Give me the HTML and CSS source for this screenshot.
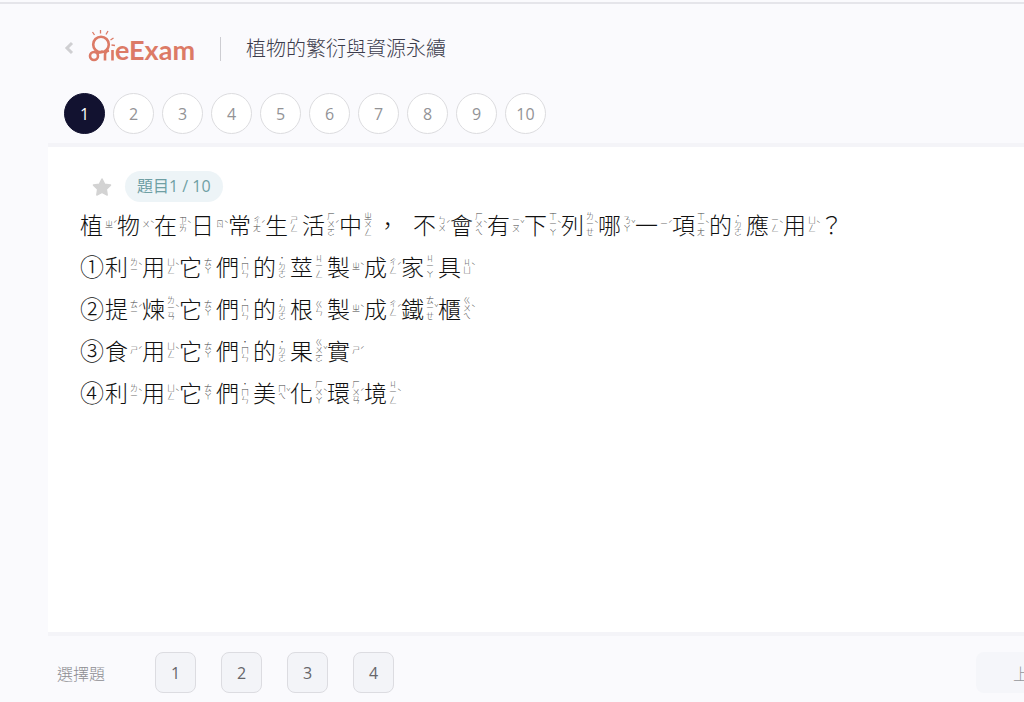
FILE: index.html
```html
<!DOCTYPE html>
<html lang="zh-Hant">
<head>
    <meta charset="UTF-8">
    <meta name="viewport" content="width=device-width, initial-scale=1.0">
    <title>OneExam</title>
    <link rel="stylesheet" href="styles.css">
</head>
<body>
    <header class="top">
        <div class="title-row">
            <a href="#" class="back" aria-label="返回">
                <svg width="10" height="14" viewBox="0 0 10 14"><path d="M8 2L3 7l5 5" fill="none" stroke="#cfcfd2" stroke-width="3"/></svg>
            </a>
            <a href="#" class="logo" aria-label="OneExam">
                <svg width="112" height="36" viewBox="0 0 112 36">
                    <g fill="none" stroke="#dc7a66" stroke-width="2.600">
                        <circle cx="13" cy="14.500" r="7.800"/>
                        <circle cx="6" cy="26" r="4"/>
                        <path d="M9 23c3-1 5-1 6-2M17 30.500v-5.500c0-3 1-4 4-4.500M24.500 30.500V20"/>
                        <path stroke-width="1.300" d="M4.500 2l2 3M12.500 0v3.500M20 1l-2 3.500M25.500 8l-3 2M27 15.500l-3.500-.5"/>
                    </g>
                    <text class="logo-text" x="27" y="30">eExam</text>
                </svg>
            </a>
            <h1>植物的繁衍與資源永續</h1>
        </div>
        <nav class="pages">
            <button class="active">1</button>
            <button>2</button>
            <button>3</button>
            <button>4</button>
            <button>5</button>
            <button>6</button>
            <button>7</button>
            <button>8</button>
            <button>9</button>
            <button>10</button>
        </nav>
    </header>

    <main class="question">
        <div class="info">
            <button class="star" aria-label="收藏">
                <svg width="20" height="18" viewBox="0 0 20 18"><path d="M10 1l2.600 5.200 5.900.9-4.200 4.100.9 5.800-5.200-2.700L4.800 17l.9-5.800L1.500 7.100l5.900-.9z" fill="#d3d3d3" stroke="#d3d3d3" stroke-width="1.500" stroke-linejoin="round"/></svg>
            </button>
            <span class="badge">題目1 / 10</span>
        </div>

        <p><ruby>植<rt><b>ㄓ</b><i>ˊ</i></rt></ruby><ruby>物<rt><b>ㄨ</b><i>ˋ</i></rt></ruby><ruby>在<rt><b>ㄗㄞ</b><i>ˋ</i></rt></ruby><ruby>日<rt><b>ㄖ</b><i>ˋ</i></rt></ruby><ruby>常<rt><b>ㄔㄤ</b><i>ˊ</i></rt></ruby><ruby>生<rt><b>ㄕㄥ</b></rt></ruby><ruby>活<rt><b>ㄏㄨㄛ</b><i>ˊ</i></rt></ruby><ruby>中<rt><b>ㄓㄨㄥ</b></rt></ruby><ruby>，</ruby><ruby>不<rt><b>ㄅㄨ</b><i>ˊ</i></rt></ruby><ruby>會<rt><b>ㄏㄨㄟ</b><i>ˋ</i></rt></ruby><ruby>有<rt><b>ㄧㄡ</b><i>ˇ</i></rt></ruby><ruby>下<rt><b>ㄒㄧㄚ</b><i>ˋ</i></rt></ruby><ruby>列<rt><b>ㄌㄧㄝ</b><i>ˋ</i></rt></ruby><ruby>哪<rt><b>ㄋㄚ</b><i>ˇ</i></rt></ruby><ruby>一<rt><b>ㄧ</b><i>ˊ</i></rt></ruby><ruby>項<rt><b>ㄒㄧㄤ</b><i>ˋ</i></rt></ruby><ruby>的<rt><b>˙ㄉㄜ</b></rt></ruby><ruby>應<rt><b>ㄧㄥ</b><i>ˋ</i></rt></ruby><ruby>用<rt><b>ㄩㄥ</b><i>ˋ</i></rt></ruby><ruby>？</ruby></p>
        <p><span class="num">①</span><ruby>利<rt><b>ㄌㄧ</b><i>ˋ</i></rt></ruby><ruby>用<rt><b>ㄩㄥ</b><i>ˋ</i></rt></ruby><ruby>它<rt><b>ㄊㄚ</b></rt></ruby><ruby>們<rt><b>˙ㄇㄣ</b></rt></ruby><ruby>的<rt><b>˙ㄉㄜ</b></rt></ruby><ruby>莖<rt><b>ㄐㄧㄥ</b></rt></ruby><ruby>製<rt><b>ㄓ</b><i>ˋ</i></rt></ruby><ruby>成<rt><b>ㄔㄥ</b><i>ˊ</i></rt></ruby><ruby>家<rt><b>ㄐㄧㄚ</b></rt></ruby><ruby>具<rt><b>ㄐㄩ</b><i>ˋ</i></rt></ruby></p>
        <p><span class="num">②</span><ruby>提<rt><b>ㄊㄧ</b><i>ˊ</i></rt></ruby><ruby>煉<rt><b>ㄌㄧㄢ</b><i>ˋ</i></rt></ruby><ruby>它<rt><b>ㄊㄚ</b></rt></ruby><ruby>們<rt><b>˙ㄇㄣ</b></rt></ruby><ruby>的<rt><b>˙ㄉㄜ</b></rt></ruby><ruby>根<rt><b>ㄍㄣ</b></rt></ruby><ruby>製<rt><b>ㄓ</b><i>ˋ</i></rt></ruby><ruby>成<rt><b>ㄔㄥ</b><i>ˊ</i></rt></ruby><ruby>鐵<rt><b>ㄊㄧㄝ</b><i>ˇ</i></rt></ruby><ruby>櫃<rt><b>ㄍㄨㄟ</b><i>ˋ</i></rt></ruby></p>
        <p><span class="num">③</span><ruby>食<rt><b>ㄕ</b><i>ˊ</i></rt></ruby><ruby>用<rt><b>ㄩㄥ</b><i>ˋ</i></rt></ruby><ruby>它<rt><b>ㄊㄚ</b></rt></ruby><ruby>們<rt><b>˙ㄇㄣ</b></rt></ruby><ruby>的<rt><b>˙ㄉㄜ</b></rt></ruby><ruby>果<rt><b>ㄍㄨㄛ</b><i>ˇ</i></rt></ruby><ruby>實<rt><b>ㄕ</b><i>ˊ</i></rt></ruby></p>
        <p><span class="num">④</span><ruby>利<rt><b>ㄌㄧ</b><i>ˋ</i></rt></ruby><ruby>用<rt><b>ㄩㄥ</b><i>ˋ</i></rt></ruby><ruby>它<rt><b>ㄊㄚ</b></rt></ruby><ruby>們<rt><b>˙ㄇㄣ</b></rt></ruby><ruby>美<rt><b>ㄇㄟ</b><i>ˇ</i></rt></ruby><ruby>化<rt><b>ㄏㄨㄚ</b><i>ˋ</i></rt></ruby><ruby>環<rt><b>ㄏㄨㄢ</b><i>ˊ</i></rt></ruby><ruby>境<rt><b>ㄐㄧㄥ</b><i>ˋ</i></rt></ruby></p>
    </main>

    <footer class="answers">
        <span class="type">選擇題</span>
        <div class="choices">
            <button>1</button>
            <button>2</button>
            <button>3</button>
            <button>4</button>
        </div>
        <button class="prev">上一題</button>
    </footer>
</body>
</html>
```
FILE: styles.css
```css
* {
    box-sizing: border-box;
}

body {
    display: flex;
    flex-direction: column;
    min-height: 100vh;
    margin: 0;
    padding-top: 2px;
    overflow: hidden;
    background-color: #fafafd;
    font-family: "Open Sans", "Noto Sans CJK TC", sans-serif;
}

button {
    padding: 0;
    font: inherit;
    cursor: pointer;
}

.top {
    border-top: 2px solid #e5e5ea;
    padding: 22px 0 13px 64px;
}

.title-row {
    display: flex;
    align-items: center;
    height: 44px;
}

.back, .logo {
    display: flex;
}

.logo {
    margin-left: 14px;
}

.logo-text {
    fill: #dc7a66;
    font: bold 27px Lato, sans-serif;
}

h1 {
    margin: 2px 0 0 20px;
    padding-left: 25px;
    border-left: 1px solid #cdcdd2;
    color: #3c3c4c;
    font-size: 20px;
    font-weight: 300;
    line-height: 24px;
}

.pages {
    display: flex;
    gap: 8px;
    margin-top: 23px;
}

.pages button {
    width: 41px;
    height: 41px;
    border: 1px solid #dcdcdf;
    border-radius: 50%;
    background-color: #fff;
    color: #939396;
    font-size: 16px;
}

.pages .active {
    border-color: #121230;
    background-color: #121230;
    color: #fff;
}

.question {
    flex: 1;
    margin-left: 48px;
    padding: 24px 32px;
    background-color: #fff;
    box-shadow: 0 0 0 4px #f4f4f8;
    clip-path: inset(-4px 0 -4px 0);
}

.info {
    display: flex;
    align-items: center;
    gap: 13px;
    margin-bottom: 1px;
    padding-left: 12px;
}

.star {
    display: flex;
    border: none;
    background: none;
}

.badge {
    padding: 0 12px;
    border-radius: 16px;
    background-color: #edf4f7;
    color: #6f9fa4;
    font-size: 16px;
    line-height: 31px;
}

p {
    display: flex;
    align-items: center;
    height: 42px;
    margin: 0;
    color: #111;
    font-family: "Noto Sans CJK TC", sans-serif;
    font-size: 23px;
    font-weight: 300;
    line-height: 42px;
}

/* 注音放在字的右邊 */
ruby {
    display: flex;
    align-items: center;
    width: 37px;
}

rt {
    display: flex;
    align-items: center;
    margin-left: 2px;
    color: #444;
    font-size: 8px;
    line-height: 8px;
}

rt b {
    width: 8px;
    font-weight: 300;
    text-align: center;
    word-break: break-all;
}

rt i {
    font-style: normal;
    width: 4px;
}

.num {
    width: 25px;
    font-size: 24px;
}

.answers {
    display: flex;
    align-items: center;
    padding: 20px 0 9px 57px;
}

.type {
    width: 98px;
    color: #8d8d92;
    font-size: 16px;
    font-weight: 300;
}

.choices {
    display: flex;
    gap: 25px;
}

.choices button {
    width: 41px;
    height: 41px;
    border: 1px solid #dcdce1;
    border-radius: 8px;
    background-color: #f3f4f8;
    color: #66666a;
    font-size: 16px;
}

.prev {
    flex: none;
    width: 122px;
    height: 41px;
    margin: 0 -74px 0 auto;
    border: none;
    border-radius: 8px;
    background-color: #f5f6fa;
    color: #96969b;
    font-weight: 300;
}
```
